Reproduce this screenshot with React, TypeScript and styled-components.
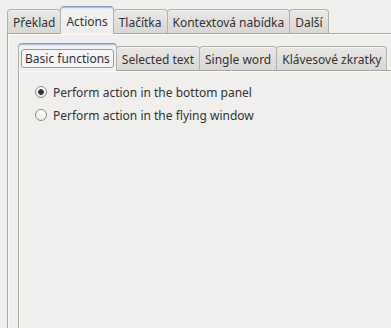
import React from 'react';
import styled, { createGlobalStyle } from 'styled-components';

const GlobalStyle = createGlobalStyle`
  html, body {
    margin: 0;
    padding: 0;
    background: #f0efed;
    overflow: hidden;
  }
  body {
    font-family: 'Noto Sans', 'DejaVu Sans', sans-serif;
    font-size: 12px;
    color: #333333;
  }
`

const Page = styled.div`
  box-sizing: border-box;
  width: 391px;
  height: 328px;
  padding: 6px 0 0 7px;
  display: flex;
  flex-direction: column;
  overflow: hidden;
`

const TabBar = styled.div`
  display: flex;
  align-items: flex-end;
  margin-bottom: -1px;
  position: relative;
  z-index: 1;
  white-space: nowrap;
`

const Tab = styled.div<{ $active?: boolean }>`
  box-sizing: border-box;
  display: flex;
  align-items: center;
  height: ${(p) => (p.$active ? '28px' : '25px')};
  padding: ${(p) => (p.$active ? '2px 5px 0' : '1px 5px 0')};
  margin-left: -1px;
  border: 1px solid #b3b1ac;
  border-top-color: ${(p) => (p.$active ? '#7f9fcb' : '#b3b1ac')};
  border-bottom-color: ${(p) => (p.$active ? '#f0efed' : '#a9a7a2')};
  border-radius: 4px 4px 0 0;
  background: ${(p) =>
    p.$active
      ? 'linear-gradient(#c8d8ee 0px, #f2f1f0 2px, #f0efed 100%)'
      : 'linear-gradient(#e9e8e6, #d8d7d3)'};
  box-shadow: ${(p) => (p.$active ? 'inset 0 1px 0 #a9c1e2' : 'inset 0 1px 0 #f4f3f2')};
  color: #333333;
  &:first-child {
    margin-left: 0;
  }
`

const FocusLabel = styled.span`
  box-sizing: border-box;
  padding: 0 3px;
  margin: 0 -3px;
  height: 19px;
  line-height: 17px;
  border: 1px solid #7f9fcb;
  border-radius: 3px;
  background: #f3f5f8;
`

const Pane = styled.div`
  flex: 1;
  border: 1px solid #a9a7a2;
  border-right: none;
  border-bottom: none;
  padding: 9px 0 0 10px;
  display: flex;
  flex-direction: column;
  box-shadow: inset 1px 1px 0 #faf9f8;
`

const InnerPane = styled.div`
  flex: 1;
  border: 1px solid #a9a7a2;
  border-right: none;
  border-bottom: none;
  padding: 12px 0 0 16px;
  display: flex;
  flex-direction: column;
  gap: 5px;
  box-shadow: inset 1px 1px 0 #faf9f8;
`

const RadioRow = styled.label`
  display: flex;
  align-items: center;
  gap: 6px;
  height: 18px;
  font-size: 12px;
  color: #333333;
`

const RadioMark = styled.span<{ $checked?: boolean }>`
  box-sizing: border-box;
  width: 12px;
  height: 12px;
  border-radius: 50%;
  border: 1px solid #8c8a86;
  background: ${(p) =>
    p.$checked
      ? 'radial-gradient(circle, #333 0 2.5px, transparent 3.2px), linear-gradient(#ffffff, #e9e8e6)'
      : 'linear-gradient(#ffffff, #ecebe9)'};
`

const outerTabs = ['Překlad', 'Actions', 'Tlačítka', 'Kontextová nabídka', 'Další'];
const innerTabs = ['Basic functions', 'Selected text', 'Single word', 'Klávesové zkratky'];

export default function App() {
  return (
    <>
      <GlobalStyle />
      <Page>
        <TabBar>
          {outerTabs.map((t) => (
            <Tab key={t} $active={t === 'Actions'}>{t}</Tab>
          ))}
        </TabBar>
        <Pane>
          <TabBar>
            {innerTabs.map((t, i) => (
              <Tab key={t} $active={i === 0}>
                {i === 0 ? <FocusLabel>{t}</FocusLabel> : t}
              </Tab>
            ))}
          </TabBar>
          <InnerPane>
            <RadioRow>
              <RadioMark $checked />
              Perform action in the bottom panel
            </RadioRow>
            <RadioRow>
              <RadioMark />
              Perform action in the flying window
            </RadioRow>
          </InnerPane>
        </Pane>
      </Page>
    </>
  );
}
